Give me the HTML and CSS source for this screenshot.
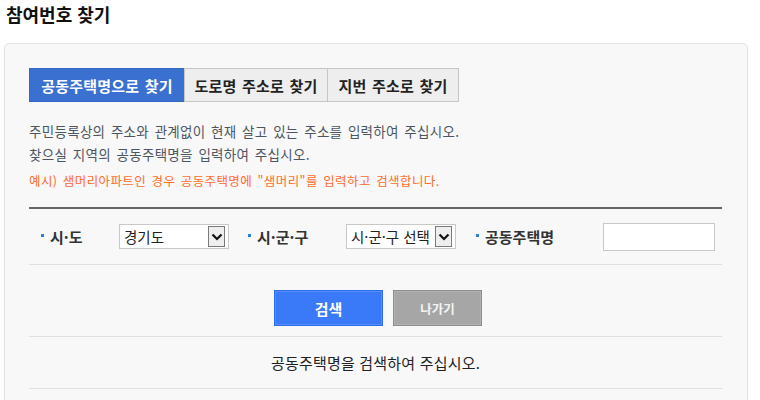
FILE: index.html
```html
<!DOCTYPE html>
<html lang="ko">
<head>
<meta charset="utf-8">
<title>참여번호 찾기</title>
<link rel="stylesheet" href="styles.css">
</head>
<body>
<h1 class="title">참여번호 찾기</h1>
<div class="panel">
  <div class="tabs">
    <a class="tab active">공동주택명으로 찾기</a>
    <a class="tab">도로명 주소로 찾기</a>
    <a class="tab">지번 주소로 찾기</a>
  </div>
  <div class="guide">
    <p>주민등록상의 주소와 관계없이 현재 살고 있는 주소를 입력하여 주십시오.</p>
    <p>찾으실 지역의 공동주택명을 입력하여 주십시오.</p>
    <p class="example">예시) 샘머리아파트인 경우 공동주택명에 "샘머리"를 입력하고 검색합니다.</p>
  </div>
  <div class="search-row">
    <div class="field f1">
      <span class="label">시·도</span>
      <div class="select"><span class="select-text">경기도</span><span class="arrow"><svg width="12" height="8" viewBox="0 0 12 8"><path d="M1.5 1.5 L6 6 L10.5 1.5" fill="none" stroke="#111" stroke-width="2.2"/></svg></span></div>
    </div>
    <div class="field f2">
      <span class="label">시·군·구</span>
      <div class="select"><span class="select-text">시·군·구 선택</span><span class="arrow"><svg width="12" height="8" viewBox="0 0 12 8"><path d="M1.5 1.5 L6 6 L10.5 1.5" fill="none" stroke="#111" stroke-width="2.2"/></svg></span></div>
    </div>
    <div class="field f3">
      <span class="label">공동주택명</span>
      <input class="text-input" type="text">
    </div>
  </div>
  <div class="buttons">
    <button class="btn btn-search">검색</button>
    <button class="btn btn-exit">나가기</button>
  </div>
  <div class="result">공동주택명을 검색하여 주십시오.</div>
</div>
</body>
</html>
```
FILE: styles.css
```css
* { box-sizing: border-box; }
body {
  margin: 0;
  background: #fff;
  font-family: "Noto Sans CJK KR", "Noto Sans", sans-serif;
  color: #222;
}
.title {
  margin: 0;
  padding: 1px 0 0 6px;
  height: 43px;
  font-size: 18px;
  line-height: 26px;
  font-weight: 700;
  color: #111;
}
.panel {
  margin-left: 4px;
  width: 744px;
  height: 400px;
  border: 1px solid #e2e2e2;
  border-radius: 5px;
  background: #f8f8f8;
  padding: 24px 25px 0 24px;
}
.tabs {
  display: flex;
  height: 34px;
}
.tab {
  display: flex;
  align-items: center;
  justify-content: center;
  height: 34px;
  border: 1px solid #c6c6c6;
  background: #eeeeee;
  font-size: 15px;
  font-weight: 700;
  color: #222;
  letter-spacing: 0.2px;
  word-spacing: 1px;
}
.tab + .tab { margin-left: -1px; }
.tab.active {
  background: #3a70d0;
  border-color: #3569c8;
  color: #fff;
  width: 156px;
}
.tab:nth-child(2) { width: 144px; }
.tab:nth-child(3) { width: 132px; }
.guide {
  margin-top: 18px;
}
.guide p {
  margin: 0;
  font-size: 13.5px;
  line-height: 23px;
  color: #4c5660;
  letter-spacing: 0.3px;
  word-spacing: 1.5px;
}
.guide .example {
  margin-top: 3px;
  font-size: 12.5px;
  color: #ff6b2b;
  letter-spacing: 0.4px;
}
.search-row {
  margin-top: 15px;
  border-top: 2px solid #666;
  border-bottom: 1px solid #e0e0e0;
  height: 58px;
  display: flex;
  align-items: center;
  padding-left: 12px;
}
.field {
  display: flex;
  align-items: center;
}
.label {
  display: flex;
  align-items: center;
  font-size: 15px;
  font-weight: 700;
  color: #333;
}
.label::before {
  content: "";
  width: 3px;
  height: 3px;
  background: #2f7fe0;
  margin-right: 6px;
  margin-top: -2px;
}
.f1 .label { width: 78px; }
.f2 { margin-left: 19px; }
.f2 .label { width: 98px; }
.f3 { margin-left: 20px; }
.f3 .label { width: 127px; }
.select {
  width: 110px;
  height: 25px;
  border: 1px solid #c8c8c8;
  background: #fff;
  display: flex;
  align-items: center;
  padding: 0 3px 0 4px;
  overflow: hidden;
}
.select-text {
  flex: 1;
  font-size: 14.5px;
  color: #222;
  white-space: nowrap;
  overflow: hidden;
}
.arrow {
  flex: none;
  width: 17px;
  height: 21px;
  border: 1px solid #7a7a7a;
  background: #eeeeee;
  display: flex;
  align-items: center;
  justify-content: center;
}
.text-input {
  width: 112px;
  height: 28px;
  border: 1px solid #c8c8c8;
  background: #fff;
  margin: 0;
  padding: 0 4px;
}
.buttons {
  display: flex;
  justify-content: center;
  gap: 10px;
  padding: 25px 0 10px 5px;
  border-bottom: 1px solid #e0e0e0;
}
.btn {
  height: 36px;
  font-family: inherit;
  font-weight: 700;
  color: #fff;
  cursor: pointer;
  padding: 0;
}
.btn-search {
  width: 109px;
  background: #3a79f7;
  border: 1px solid #2c6cf2;
  box-shadow: inset 0 0 0 1px #568cf8;
  font-size: 15px;
}
.btn-exit {
  width: 89px;
  background: #a6a6a6;
  border: 1px solid #8c8c8c;
  box-shadow: inset 0 0 0 1px #b2b2b2;
  font-size: 12.5px;
  color: #f4f4f4;
}
.result {
  height: 52px;
  display: flex;
  align-items: center;
  justify-content: center;
  font-size: 15px;
  letter-spacing: 0.2px;
  color: #222;
  border-bottom: 1px solid #e0e0e0;
}
```
